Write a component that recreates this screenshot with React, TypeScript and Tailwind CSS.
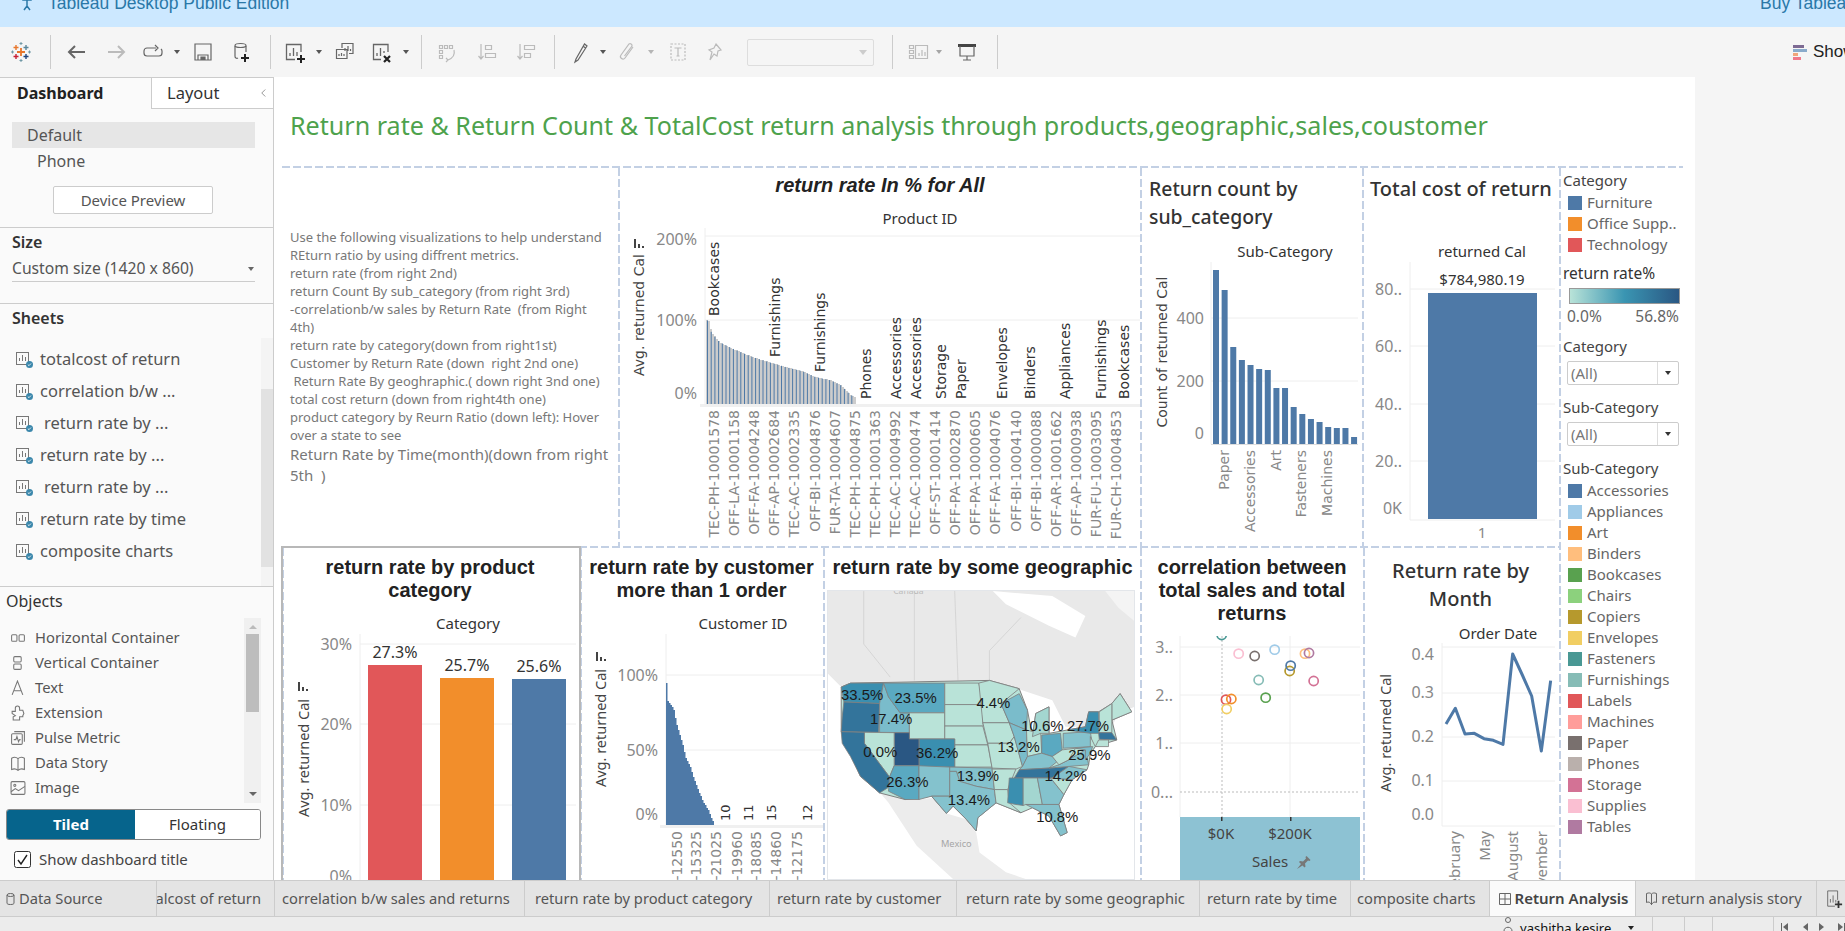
import React from 'react';

const palette: Record<string, string> = {
  l: '#b9e3d8', m: '#a3d6d0', n: '#84c2cd', o: '#7abccb', p: '#5aa9c1', q: '#3a8fb0', r: '#33749b', s: '#2a5783',
};

const usOutline = '90,428 510,420 600,445 625,510 640,590 650,520 690,500 690,580 745,570 800,560 810,515 840,515 880,490 905,460 940,515 880,540 895,600 830,620 815,640 810,675 805,690 760,720 735,765 720,795 745,880 725,890 690,830 640,805 605,820 530,790 475,835 470,875 440,840 400,800 380,822 335,770 255,780 178,760 120,710 62,575 62,440';

const states: [string, string][] = [
  ['q', '90,428 190,428 178,490 70,485 62,440'],
  ['r', '70,485 178,490 175,577 62,575 65,530'],
  ['o', '190,428 205,470 240,518 268,518 268,578 178,577 178,490'],
  ['p', '190,428 375,428 375,518 268,518 240,518 205,470'],
  ['l', '268,518 375,518 375,597 268,597'],
  ['l', '375,428 478,428 490,493 375,493'],
  ['l', '375,493 490,493 490,548 492,558 375,558'],
  ['l', '375,558 490,558 505,615 405,615 405,597 375,597'],
  ['l', '405,615 505,615 518,682 405,682'],
  ['q', '297,597 405,597 405,682 297,682'],
  ['s', '222,578 268,578 268,597 297,597 297,678 222,678'],
  ['l', '132,577 222,578 222,678 208,712 132,610'],
  ['r', '62,575 132,577 132,610 208,712 210,740 178,760 120,710 90,650 65,610'],
  ['p', '222,678 297,678 297,780 255,780 205,755 208,712'],
  ['n', '297,678 390,682 390,770 335,770 297,780'],
  ['n', '390,682 518,685 525,750 470,740 420,725 410,695 390,695'],
  ['n', '390,695 410,695 420,725 470,740 525,750 530,790 475,835 470,875 440,840 400,800 380,822 335,770 390,770'],
  ['l', '478,428 510,420 600,445 545,490 570,548 490,548'],
  ['l', '490,548 570,548 585,590 570,610 505,610'],
  ['l', '505,610 570,610 585,590 610,680 590,688 518,685'],
  ['l', '518,688 590,688 565,750 525,750'],
  ['l', '525,750 565,750 570,790 605,820 530,790'],
  ['o', '545,490 600,460 625,510 622,570 570,548'],
  ['o', '585,590 570,548 622,570 625,650 610,680'],
  ['l', '622,570 665,580 668,640 625,650'],
  ['m', '640,590 650,520 690,500 690,580 665,580'],
  ['p', '668,585 725,580 730,630 700,650 668,640'],
  ['n', '610,680 625,650 668,640 700,650 715,665 690,685 600,690'],
  ['r', '585,715 600,690 690,685 750,680 700,715'],
  ['q', '570,715 612,715 612,798 590,795 565,790'],
  ['m', '612,715 655,715 670,795 620,795 612,798'],
  ['n', '655,715 695,715 735,765 720,795 670,795'],
  ['n', '620,795 720,795 745,880 725,890 690,830 640,805'],
  ['l', '695,715 760,720 735,765'],
  ['n', '700,715 750,680 805,690 760,720'],
  ['n', '690,685 720,675 750,660 800,630 810,675 750,680'],
  ['l', '700,650 730,630 770,625 750,660 720,675'],
  ['n', '733,580 815,575 822,620 733,625'],
  ['q', '745,570 800,560 810,515 840,515 842,580 815,580'],
  ['l', '880,490 905,460 940,515 880,540'],
  ['l', '842,515 880,490 880,578 842,578'],
  ['r', '840,578 880,578 895,600 842,598'],
  ['l', '840,600 870,600 870,620 830,620'],
  ['l', '815,590 830,620 815,640'],
  ['o', '770,625 822,620 815,640 800,660 800,630'],
];

const mapLabels: [string, number, number][] = [
  ['33.5%', 125, 462], ['23.5%', 287, 473], ['17.4%', 213, 537], ['4.4%', 522, 488], ['10.6%', 670, 556],
  ['27.7%', 808, 556], ['13.2%', 598, 621], ['0.0%', 180, 636], ['36.2%', 352, 638], ['25.9%', 812, 645],
  ['26.3%', 262, 725], ['13.9%', 475, 708], ['14.2%', 740, 708], ['13.4%', 448, 781], ['10.8%', 715, 833],
];

const productIds = [
  'TEC-PH-10001578', 'OFF-LA-10001158', 'OFF-FA-10004248', 'OFF-AP-10002684', 'TEC-AC-10002335', 'OFF-BI-10004876',
  'FUR-TA-10004607', 'TEC-PH-10004875', 'TEC-PH-10001363', 'TEC-AC-10004992', 'TEC-AC-10000474', 'OFF-ST-10001414',
  'OFF-PA-10002870', 'OFF-PA-10000605', 'OFF-FA-10004076', 'OFF-BI-10004140', 'OFF-BI-10000088', 'OFF-AR-10001662',
  'OFF-AP-10000938', 'FUR-FU-10003095', 'FUR-CH-10004853',
];

const topLabels: [string, number, number][] = [
  ['Bookcases', 714, 316], ['Furnishings', 775, 357], ['Furnishings', 820, 372], ['Phones', 866, 399],
  ['Accessories', 896, 399], ['Accessories', 916, 399], ['Storage', 941, 399], ['Paper', 961, 399],
  ['Envelopes', 1002, 399], ['Binders', 1030, 399], ['Appliances', 1065, 399], ['Furnishings', 1101, 399], ['Bookcases', 1124, 399],
];

const subCats: [string, string][] = [
  ['Accessories', '#4e79a7'], ['Appliances', '#a0cbe8'], ['Art', '#f28e2b'], ['Binders', '#ffbe7d'], ['Bookcases', '#59a14f'],
  ['Chairs', '#8cd17d'], ['Copiers', '#b6992d'], ['Envelopes', '#f1ce63'], ['Fasteners', '#499894'], ['Furnishings', '#86bcb6'],
  ['Labels', '#e15759'], ['Machines', '#ff9d9a'], ['Paper', '#79706e'], ['Phones', '#bab0ac'], ['Storage', '#d37295'],
  ['Supplies', '#fabfd2'], ['Tables', '#b07aa1'],
];

const note = [
  'Use the following visualizations to help understand',
  'REturn ratio by using diffrent metrics.',
  'return rate (from right 2nd)',
  'return Count By sub_category (from right 3rd)',
  '-correlationb/w sales by Return Rate  (from Right',
  '4th)',
  'return rate by category(down from right1st)',
  'Customer by Return Rate (down  right 2nd one)',
  ' Return Rate By geoghraphic.( down right 3nd one)',
  'total cost return (down from right4th one)',
  'product category by Reurn Ratio (down left): Hover',
  'over a state to see',
];

function lerp(pts: number[][], x: number) {
  for (let i = 1; i < pts.length; i++) {
    if (x <= pts[i][0]) {
      const [x0, y0] = pts[i - 1];
      const [x1, y1] = pts[i];
      return y0 + ((y1 - y0) * (x - x0)) / (x1 - x0);
    }
  }
  return pts[pts.length - 1][1];
}

const productCurve = [[706, 320], [708, 321], [711, 333], [719, 342], [735, 350], [752, 357], [768, 362], [785, 367], [801, 371], [815, 377], [829, 380], [840, 385], [850, 395], [855, 397]];
const customerCurve = [[666, 683], [667, 700], [673, 708], [677, 727], [682, 743], [685, 757], [690, 767], [695, 783], [702, 800], [708, 810], [714, 825]];

// stepped outline for the two long bar charts
function stepped(curve: number[][], from: number, to: number, step: number, base: number) {
  let d = `M${from} ${base}`;
  for (let x = from; x < to; x += step) {
    const y = Math.round(lerp(curve, x));
    d += ` L${x} ${y} L${x + step} ${y}`;
  }
  return d + ` L${to} ${base} Z`;
}

const Rot = ({ x, y, children, anchor = 'end', className = '' }: { x: number; y: number; children: React.ReactNode; anchor?: 'start' | 'middle' | 'end'; className?: string }) => (
  <text x={x} y={y} textAnchor={anchor} transform={`rotate(-90 ${x} ${y})`} className={className}>{children}</text>
);

const SortIcon = ({ x, y }: { x: number; y: number }) => (
  <g fill="#444">
    <rect x={x} y={y} width="2" height="9" />
    <rect x={x + 4} y={y + 5} width="2" height="4" />
    <rect x={x + 8} y={y + 7} width="2" height="2" />
  </g>
);

const VDash = () => (
  <div className="w-[2px] shrink-0 self-stretch bg-[repeating-linear-gradient(180deg,#c3d0e4_0,#c3d0e4_8px,transparent_8px,transparent_11px)]" />
);
const HDash = () => (
  <div className="h-[2px] shrink-0 bg-[repeating-linear-gradient(90deg,#c3d0e4_0,#c3d0e4_8px,transparent_8px,transparent_11px)]" />
);

const ProductChart = () => {
  const bars = [];
  for (let x = 707; x < 855; x += 3.7) {
    bars.push(<rect key={x} x={x} y={lerp(productCurve, x)} width="1" height={404 - lerp(productCurve, x)} fill="#4e79a7" />);
  }
  return (
    <svg viewBox="620 203 520 343" className="block w-[520px] h-[343px]">
      <text x="920" y="224" textAnchor="middle" className="text-[15px] fill-[#333]">Product ID</text>
      <g stroke="#eeeeee">
        <line x1="705" y1="236" x2="1140" y2="236" />
        <line x1="705" y1="320" x2="1140" y2="320" />
        <line x1="705" y1="228" x2="705" y2="405" />
      </g>
      <rect x="700" y="404" width="440" height="3" fill="#f0f0f0" />
      <path d={stepped(productCurve, 706, 856, 2, 404)} fill="#cccccc" />
      {bars}
      <Rot x={644} y={315} anchor="middle" className="font-['DejaVu_Sans',sans-serif] text-[14px] font-medium fill-[#444]">Avg. returned Cal</Rot>
      <SortIcon x={634} y={239} />
      <g className="text-[16px] fill-[#888]" textAnchor="end">
        <text x="697" y="245">200%</text>
        <text x="697" y="326">100%</text>
        <text x="697" y="399">0%</text>
      </g>
      <g className="font-['DejaVu_Sans',sans-serif] text-[14px] fill-[#333]">
        {topLabels.map(([t, x, y], i) => <Rot key={i} x={x + 5} y={y} anchor="start">{t}</Rot>)}
      </g>
      <g className="font-['DejaVu_Sans',sans-serif] text-[14px] fill-[#888]">
        {productIds.map((t, i) => <Rot key={t} x={719 + i * 20.1} y={410}>{t}</Rot>)}
      </g>
    </svg>
  );
};

const CountChart = () => {
  const tops = [270, 290, 347, 360, 365, 369, 370, 388, 388, 407, 414, 419, 422, 427, 428, 428, 437];
  return (
    <svg viewBox="1142 236 220 310" className="block w-[220px] h-[310px]">
      <text x="1285" y="257" textAnchor="middle" className="text-[15px] fill-[#333]">Sub-Category</text>
      <g stroke="#eeeeee">
        <line x1="1211" y1="318" x2="1358" y2="318" />
        <line x1="1211" y1="381" x2="1358" y2="381" />
        <line x1="1211" y1="262" x2="1211" y2="444" />
      </g>
      <rect x="1211" y="444" width="147" height="1" fill="#dddddd" />
      {tops.map((y, i) => <rect key={i} x={1213 + i * 8.63} y={y} width="6" height={444 - y} fill="#4e79a7" />)}
      <Rot x={1167} y={352} anchor="middle" className="font-['DejaVu_Sans',sans-serif] text-[14px] font-medium fill-[#444]">Count of returned Cal</Rot>
      <g className="text-[16px] fill-[#888]" textAnchor="end">
        <text x="1204" y="324">400</text>
        <text x="1204" y="387">200</text>
        <text x="1204" y="439">0</text>
      </g>
      <g className="font-['DejaVu_Sans',sans-serif] text-[14px] fill-[#888]">
        <Rot x={1229} y={450}>Paper</Rot>
        <Rot x={1255} y={450}>Accessories</Rot>
        <Rot x={1281} y={450}>Art</Rot>
        <Rot x={1306} y={450}>Fasteners</Rot>
        <Rot x={1332} y={450}>Machines</Rot>
      </g>
    </svg>
  );
};

const CostChart = () => (
  <svg viewBox="1364 236 195 310" className="block w-[195px] h-[310px]">
    <text x="1482" y="257" textAnchor="middle" className="text-[15px] fill-[#333]">returned Cal</text>
    <g stroke="#eeeeee">
      {[289, 346, 404, 461, 520].map((y) => <line key={y} x1="1410" y1={y} x2="1555" y2={y} />)}
      <line x1="1410" y1="262" x2="1410" y2="520" />
    </g>
    <rect x="1428" y="293" width="109" height="226" fill="#4e79a7" />
    <text x="1482" y="285" textAnchor="middle" className="text-[15px] fill-[#333]">$784,980.19</text>
    <g className="text-[16px] fill-[#888]" textAnchor="end">
      <text x="1402" y="295">80..</text>
      <text x="1402" y="352">60..</text>
      <text x="1402" y="410">40..</text>
      <text x="1402" y="467">20..</text>
      <text x="1402" y="514">0K</text>
    </g>
    <text x="1482" y="538" textAnchor="middle" className="text-[15px] fill-[#888]">1</text>
  </svg>
);

const CategoryChart = () => (
  <svg viewBox="284 612 296 268" className="block w-[296px] h-[268px]">
    <text x="468" y="629" textAnchor="middle" className="text-[15px] fill-[#333]">Category</text>
    <g stroke="#eeeeee">
      {[644, 724, 805].map((y) => <line key={y} x1="360" y1={y} x2="576" y2={y} />)}
      <line x1="360" y1="634" x2="360" y2="880" />
    </g>
    <rect x="368" y="665" width="54" height="215" fill="#e15759" />
    <rect x="440" y="678" width="54" height="202" fill="#f28e2b" />
    <rect x="512" y="679" width="54" height="201" fill="#4e79a7" />
    <g className="text-[16px] fill-[#333]" textAnchor="middle">
      <text x="395" y="658">27.3%</text>
      <text x="467" y="671">25.7%</text>
      <text x="539" y="672">25.6%</text>
    </g>
    <g className="text-[16px] fill-[#888]" textAnchor="end">
      <text x="352" y="650">30%</text>
      <text x="352" y="730">20%</text>
      <text x="352" y="811">10%</text>
      <text x="352" y="882">0%</text>
    </g>
    <Rot x={309} y={758} anchor="middle" className="text-[14.5px] fill-[#444]">Avg. returned Cal</Rot>
    <SortIcon x={298} y={682} />
  </svg>
);

const CustomerChart = () => (
  <svg viewBox="582 612 241 268" className="block w-[241px] h-[268px]">
    <text x="743" y="629" textAnchor="middle" className="text-[15px] fill-[#333]">Customer ID</text>
    <g stroke="#eeeeee">
      <line x1="666" y1="675" x2="823" y2="675" />
      <line x1="666" y1="750" x2="823" y2="750" />
      <line x1="666" y1="634" x2="666" y2="825" />
    </g>
    <rect x="660" y="825" width="163" height="3" fill="#f0f0f0" />
    <path d={stepped(customerCurve, 666, 714, 1.5, 825)} fill="#4e79a7" />
    <g className="text-[16px] fill-[#888]" textAnchor="end">
      <text x="658" y="681">100%</text>
      <text x="658" y="756">50%</text>
      <text x="658" y="820">0%</text>
    </g>
    <Rot x={606} y={728} anchor="middle" className="text-[14.5px] fill-[#444]">Avg. returned Cal</Rot>
    <SortIcon x={596} y={652} />
    <g className="font-['DejaVu_Sans',sans-serif] text-[13px] fill-[#333]">
      <Rot x={730} y={821} anchor="start">10</Rot>
      <Rot x={753} y={821} anchor="start">11</Rot>
      <Rot x={776} y={821} anchor="start">15</Rot>
      <Rot x={812} y={821} anchor="start">12</Rot>
    </g>
    <g className="font-['DejaVu_Sans',sans-serif] text-[14px] fill-[#888]">
      {[['-12550', 682], ['-15325', 701], ['-21025', 721], ['-19960', 742], ['-18085', 761], ['-14860', 781], ['-12175', 802]].map(([t, x]) => (
        <Rot key={t} x={x as number} y={831}>{t}</Rot>
      ))}
    </g>
  </svg>
);

const MapChart = () => (
  <svg viewBox="22 150 925 870" className="block w-[308px] h-[290px] border border-[#e3e6ea]">
    <rect x="22" y="150" width="925" height="870" fill="#ffffff" />
    <polygon points="22,150 947,150 947,500 900,520 880,560 800,560 740,560 700,480 520,420 90,425 62,440 22,400" fill="#e9e9e9" />
    <polygon points="520,150 700,165 800,225 770,290 690,255 560,190" fill="#ffffff" />
    <polygon points="860,150 947,150 947,240 900,200" fill="#f4f4f4" />
    <polygon points="180,760 300,780 340,775 380,822 440,840 470,880 480,940 560,1000 620,1020 400,1020 290,920 205,790" fill="#ececec" />
    <g fill="none" stroke="#cccccc" strokeWidth="2">
      <polyline points="130,150 130,310 210,410" />
      <polyline points="283,150 283,420" />
      <polyline points="405,150 415,420" />
      <polyline points="605,230 510,330 510,420" />
    </g>
    <text x="265" y="160" textAnchor="middle" fontSize="26" fill="#bbbbbb">Canada</text>
    <polygon points={usOutline} fill="#b9e3d8" stroke="#808080" strokeWidth="3" strokeLinejoin="round" />
    <g stroke="#808080" strokeWidth="2.5" strokeLinejoin="round">
      {states.map(([c, p], i) => <polygon key={i} points={p} fill={palette[c]} />)}
    </g>
    <text x="410" y="925" textAnchor="middle" fontSize="28" fill="#a6a6a6">Mexico</text>
    <g fontSize="45" fill="#1a1a1a" textAnchor="middle" className="font-['Liberation_Sans',sans-serif]">
      {mapLabels.map(([t, x, y]) => <text key={t} x={x} y={y + 16}>{t}</text>)}
    </g>
  </svg>
);

const ScatterChart = () => {
  const dots: [number, number, string][] = [
    [275, 285, '#499894'], [326, 341, '#fabfd2'], [374, 348, '#79706e'], [434, 329, '#a0cbe8'], [525, 341, '#ffbe7d'],
    [537, 339, '#b07aa1'], [479, 393, '#b6992d'], [482, 377, '#4e79a7'], [551, 423, '#d37295'], [386, 420, '#86bcb6'],
    [407, 473, '#59a14f'], [288, 479, '#e15759'], [304, 477, '#f28e2b'], [290, 507, '#f1ce63'],
  ];
  return (
    <svg viewBox="1142 636 221 244" className="block w-[221px] h-[244px]">
      <g stroke="#eeeeee">
        <line x1="1180" y1="647" x2="1360" y2="647" />
        <line x1="1180" y1="695" x2="1360" y2="695" />
        <line x1="1180" y1="743" x2="1360" y2="743" />
        <line x1="1180" y1="636" x2="1180" y2="817" />
        <line x1="1290" y1="636" x2="1290" y2="817" />
      </g>
      <line x1="1180" y1="792" x2="1360" y2="792" stroke="#bbbbbb" strokeDasharray="2 2" />
      <line x1="1222" y1="636" x2="1222" y2="817" stroke="#bbbbbb" strokeDasharray="2 2" />
      {dots.map(([x, y, c], i) => (
        <circle key={i} cx={1130 + x / 3} cy={540 + y / 3} r="4.6" fill="none" stroke={c} strokeWidth="1.7" />
      ))}
      <g className="text-[16px] fill-[#888]" textAnchor="end">
        <text x="1173" y="653">3..</text>
        <text x="1173" y="701">2..</text>
        <text x="1173" y="749">1..</text>
        <text x="1173" y="798">0...</text>
      </g>
      <rect x="1180" y="817" width="180" height="63" fill="#8dc2d3" />
      <rect x="1221" y="817" width="1.5" height="4" fill="#333" />
      <rect x="1290" y="817" width="1.5" height="4" fill="#333" />
      <g className="text-[15px] fill-[#444]" textAnchor="middle">
        <text x="1221" y="839">$0K</text>
        <text x="1290" y="839">$200K</text>
        <text x="1270" y="867">Sales</text>
      </g>
      <path d="M1297 869l4-5-2-2 1-1 3 .5 3-3 -.5-1.500 1-1 4 4-1 1-1.500-.5-3 3 .5 3-1 1-2-2z" fill="#777" />
    </svg>
  );
};

const MonthChart = () => {
  const pts = [[948, 552], [976, 505], [1005, 582], [1033, 580], [1062, 596], [1090, 601], [1119, 613], [1148, 342], [1177, 405], [1205, 468], [1234, 633], [1262, 422]];
  return (
    <svg viewBox="1365 620 194 260" className="block w-[194px] h-[260px]">
      <text x="1498" y="639" textAnchor="middle" className="text-[15px] fill-[#333]">Order Date</text>
      <g stroke="#eeeeee">
        {[647, 693, 737, 781, 826].map((y) => <line key={y} x1="1442" y1={y} x2="1555" y2={y} />)}
        <line x1="1442" y1="643" x2="1442" y2="826" />
      </g>
      <polyline points={pts.map(([x, y]) => `${1130 + x / 3},${540 + y / 3}`).join(' ')} fill="none" stroke="#4e79a7" strokeWidth="3" strokeLinejoin="round" />
      <g className="text-[16px] fill-[#888]" textAnchor="end">
        <text x="1434" y="660">0.4</text>
        <text x="1434" y="698">0.3</text>
        <text x="1434" y="742">0.2</text>
        <text x="1434" y="786">0.1</text>
        <text x="1434" y="820">0.0</text>
      </g>
      <Rot x={1391} y={733} anchor="middle" className="text-[14.5px] fill-[#444]">Avg. returned Cal</Rot>
      <g className="text-[15px] fill-[#888]">
        <Rot x={1460} y={831}>February</Rot>
        <Rot x={1490} y={831}>May</Rot>
        <Rot x={1518} y={831}>August</Rot>
        <Rot x={1547} y={831}>November</Rot>
      </g>
    </svg>
  );
};

const Swatch = ({ label, color }: { label: string; color: string }) => (
  <div className="flex h-[21px] items-center gap-[5px]">
    <span className="w-[14px] h-[14px] shrink-0" style={{ backgroundColor: color }} />
    <span className="text-[15px] text-[#666] whitespace-nowrap">{label}</span>
  </div>
);

const Picker = () => (
  <div className="ml-[4px] flex h-[24px] w-[112px] items-center border border-[#ccc] rounded-[2px] bg-white">
    <span className="flex-1 pl-[3px] text-[15px] text-[#777]">(All)</span>
    <span className="flex h-full w-[21px] items-center justify-center border-l border-[#ddd]">
      <span className="border-x-[3px] border-t-[4px] border-x-transparent border-t-[#333]" />
    </span>
  </div>
);

const Legend = () => (
  <div className="w-[122px] pt-[2px] pl-[2px]">
    <div className="h-[20px] text-[15px] leading-[20px] text-[#444]">Category</div>
    <div className="ml-[5px] mt-[2px]">
      <Swatch label="Furniture" color="#4e79a7" />
      <Swatch label="Office Supp.." color="#f28e2b" />
      <Swatch label="Technology" color="#e15759" />
    </div>
    <div className="mt-[8px] h-[20px] text-[15.5px] leading-[20px] text-[#333]">return rate%</div>
    <div className="ml-[6px] mt-[5px] h-[16px] w-[111px] border border-[#999] bg-[linear-gradient(90deg,#b9e3d8,#3a95b2_50%,#2a5783)]" />
    <div className="ml-[4px] mt-[2px] flex w-[112px] justify-between text-[15.5px] leading-[20px] text-[#666]">
      <span>0.0%</span>
      <span>56.8%</span>
    </div>
    <div className="mt-[10px] h-[20px] text-[15px] leading-[20px] text-[#444]">Category</div>
    <div className="mt-[5px]"><Picker /></div>
    <div className="mt-[12px] h-[20px] text-[15px] leading-[20px] text-[#444]">Sub-Category</div>
    <div className="mt-[5px]"><Picker /></div>
    <div className="mt-[12px] h-[20px] text-[15px] leading-[20px] text-[#444]">Sub-Category</div>
    <div className="ml-[5px] mt-[2px]">
      {subCats.map(([t, c]) => <Swatch key={t} label={t} color={c} />)}
    </div>
  </div>
);

const Dashboard = () => (
  <div className="w-[1421px] shrink-0 bg-white overflow-hidden font-['Noto_Sans',sans-serif]">
    <div className="flex h-[89px] items-end pb-[23px] pl-[16px] text-[25.1px] leading-[36px] text-[#4ea24c] whitespace-nowrap">
      Return rate &amp; Return Count &amp; TotalCost return analysis through products,geographic,sales,coustomer
    </div>
    <div className="ml-[8px] w-[1401px]"><HDash /></div>
    <div className="ml-[8px] flex w-[1401px] h-[714px]">
      <div className="w-[1277px] shrink-0 flex flex-col">
        <div className="flex h-[378px]">
          <div className="w-[2px] shrink-0" />
          <div className="w-[334px] shrink-0 pl-[6px] pt-[60px] text-[13px] leading-[18px] text-[#787878] whitespace-pre">
            {note.map((l, i) => <p key={i}>{l}</p>)}
            <p className="text-[15px] leading-[21px]">Return Rate by Time(month)(down from right</p>
            <p className="text-[15px] leading-[21px]">5th  )</p>
          </div>
          <VDash />
          <div className="w-[520px] shrink-0">
            <div className="h-[35px] pt-[5px] text-center font-['Liberation_Sans',sans-serif] text-[20px] leading-[24px] font-bold italic text-[#222]">return rate In % for All</div>
            <ProductChart />
          </div>
          <VDash />
          <div className="w-[220px] shrink-0">
            <div className="h-[68px] pl-[7px] pt-[7px] text-[19.4px] leading-[28px] font-medium text-[#333] whitespace-nowrap">Return count by<br />sub_category</div>
            <CountChart />
          </div>
          <VDash />
          <div className="w-[195px] shrink-0">
            <div className="h-[68px] pl-[6px] pt-[7px] text-[20px] leading-[28px] font-medium text-[#333] whitespace-nowrap">Total cost of return</div>
            <CostChart />
          </div>
        </div>
        <HDash />
        <div className="flex h-[332px]">
          <div className="relative flex">
            <VDash />
            <div className="w-[296px] shrink-0">
              <div className="h-[64px] pt-[8px] text-center font-['Liberation_Sans',sans-serif] text-[20px] leading-[23px] font-bold text-[#222] pr-[4px]">return rate by product<br />category</div>
              <CategoryChart />
            </div>
            <div className="absolute -left-[1px] -top-[2px] -right-[1px] bottom-0 border-x-[2px] border-t-[2px] border-[#b8b8b8]" />
          </div>
          <VDash />
          <div className="w-[241px] shrink-0">
            <div className="h-[64px] pt-[8px] pr-[2px] text-center font-['Liberation_Sans',sans-serif] text-[20px] leading-[23px] font-bold text-[#222] whitespace-nowrap">return rate by customer<br />more than 1 order</div>
            <CustomerChart />
          </div>
          <VDash />
          <div className="w-[315px] shrink-0">
            <div className="h-[42px] pt-[8px] text-center font-['Liberation_Sans',sans-serif] text-[20px] leading-[23px] font-bold text-[#222] whitespace-nowrap">return rate by some geographic</div>
            <div className="pl-[2px]"><MapChart /></div>
          </div>
          <VDash />
          <div className="w-[221px] shrink-0">
            <div className="h-[88px] pt-[8px] pr-[1px] text-center font-['Liberation_Sans',sans-serif] text-[20px] leading-[23px] font-bold text-[#222]">correlation between<br />total sales and total<br />returns</div>
            <ScatterChart />
          </div>
          <VDash />
          <div className="w-[194px] shrink-0">
            <div className="h-[72px] pt-[9px] text-center text-[20px] leading-[28px] font-medium text-[#333] pr-[3px]">Return rate by<br />Month</div>
            <MonthChart />
          </div>
        </div>
      </div>
      <VDash />
      <Legend />
    </div>
  </div>
);

const SheetIcon = ({ dot = true }: { dot?: boolean }) => (
  <svg viewBox="0 0 17 17" className="w-[17px] h-[17px] shrink-0">
    <rect x="0.5" y="1.5" width="12" height="12" fill="none" stroke="#777" />
    <path d="M3.5 10V7M6.500 10V4M9.500 10V6" stroke="#777" />
    {dot && <circle cx="13.5" cy="13.5" r="3.5" fill="#3b87ab" />}
    {dot && <path d="M11.8 13.5l1.2 1.2 2-2.2" stroke="#fff" fill="none" strokeWidth="0.8" />}
  </svg>
);

const Sheet = ({ label, indent, dot }: { label: string; indent?: boolean; dot?: boolean }) => (
  <div className={`flex h-[32px] items-center pl-[16px] ${indent ? 'gap-[11px]' : 'gap-[7px]'}`}>
    <SheetIcon dot={dot} />
    <span className="text-[16.5px] text-[#555] whitespace-nowrap">{label}</span>
  </div>
);

const objectIcons: Record<string, React.ReactNode> = {
  h: <><rect x="1.5" y="4.5" width="5" height="6" rx="1" /><rect x="8.5" y="4.5" width="5" height="6" rx="1" /></>,
  v: <><rect x="3.5" y="1.5" width="7" height="5" rx="1" /><rect x="3.5" y="8.5" width="7" height="5" rx="1" /></>,
  t: <path d="M2 14L7 1l5 13M4 10h6" />,
  e: <path d="M2 6h3V3a2 2 0 0 1 4 0v2h3l1 3-1 2v1H9v3H3v-3l2-1-3-2z" />,
  p: <><rect x="1.5" y="3.5" width="10" height="10" rx="1" /><path d="M4 1.500h9.500V11M3.500 9h2l1-3 1.500 5 1-2h1" /></>,
  d: <path d="M1.500 3C4 1.500 6 2 7.500 3.500 9 2 11 1.500 13.500 3v10.500C11 12.500 9 13 7.500 14.500 6 13 4 12.500 1.500 13.500zM7.500 3.500v11" />,
  i: <><rect x="1" y="1.5" width="13" height="12" rx="1" /><circle cx="4.5" cy="5" r="1" /><path d="M1 11l4-3 3 2 6-4" /></>,
};

const ObjectRow = ({ icon, label }: { icon: string; label: string }) => (
  <div className="flex h-[25px] items-center gap-[9px] pl-[10px]">
    <svg viewBox="0 0 15 15" className="w-[16px] h-[16px] shrink-0" fill="none" stroke="#777">{objectIcons[icon]}</svg>
    <span className="text-[14.8px] text-[#555] whitespace-nowrap">{label}</span>
  </div>
);

const Sidebar = () => (
  <div className="w-[274px] shrink-0 border-r border-[#ccc] bg-[#fafafa] font-['Noto_Sans',sans-serif]">
    <div className="flex h-[32px] border-t border-[#ccc]">
      <div className="w-[151px] pl-[17px] text-[16px] leading-[30px] font-bold text-[#222]">Dashboard</div>
      <div className="flex-1 flex items-center justify-between border-l border-b border-[#ccc] bg-white pl-[15px] pr-[6px]">
        <span className="text-[16.5px] text-[#333]">Layout</span>
        <svg viewBox="0 0 8 10" className="w-[7px] h-[10px]"><path d="M6 1L2 5l4 4" fill="none" stroke="#888" /></svg>
      </div>
    </div>
    <div className="ml-[12px] mt-[13px] h-[26px] w-[243px] bg-[#e6e6e6] pl-[15px] text-[16px] leading-[26px] text-[#555]">Default</div>
    <div className="h-[26px] pl-[37px] text-[16px] leading-[26px] text-[#555]">Phone</div>
    <div className="ml-[53px] mt-[12px] flex h-[28px] w-[160px] items-center justify-center rounded-[2px] border border-[#ccc] bg-white text-[15px] text-[#555]">Device Preview</div>
    <div className="mt-[13px] h-[76px] border-t border-[#ccc]">
      <div className="pl-[12px] pt-[1px] text-[16px] leading-[26px] font-semibold text-[#333]">Size</div>
      <div className="ml-[12px] flex h-[27px] w-[243px] items-center justify-between border-b border-[#ccc] pt-[2px]">
        <span className="text-[15.7px] text-[#555]">Custom size (1420 x 860)</span>
        <span className="mr-[1px] border-x-[3px] border-t-[4px] border-x-transparent border-t-[#666]" />
      </div>
    </div>
    <div className="h-[283px] border-t border-[#ccc]">
      <div className="h-[34px] pl-[12px] pt-[1px] text-[16px] leading-[26px] font-semibold text-[#333]">Sheets</div>
      <div className="flex h-[248px]">
        <div className="flex-1 pt-[5px]">
          <Sheet label="totalcost of return" dot />
          <Sheet label="correlation b/w ..." dot />
          <Sheet label="return rate by ..." dot indent />
          <Sheet label="return rate by ..." dot />
          <Sheet label="return rate by ..." dot indent />
          <Sheet label="return rate by time" dot />
          <Sheet label="composite charts" />
        </div>
        <div className="w-[12px] bg-[#f4f4f4] pt-[51px]"><div className="h-[178px] bg-[#e2e2e2]" /></div>
      </div>
    </div>
    <div className="border-t border-[#ccc]">
      <div className="h-[31px] pl-[6px] pt-[1px] text-[16px] leading-[26px] text-[#333]">Objects</div>
      <div className="flex h-[185px] w-[261px]">
        <div className="flex-1 pt-[7px]">
          <ObjectRow icon="h" label="Horizontal Container" />
          <ObjectRow icon="v" label="Vertical Container" />
          <ObjectRow icon="t" label="Text" />
          <ObjectRow icon="e" label="Extension" />
          <ObjectRow icon="p" label="Pulse Metric" />
          <ObjectRow icon="d" label="Data Story" />
          <ObjectRow icon="i" label="Image" />
        </div>
        <div className="flex w-[17px] flex-col items-center bg-[#f0f0f0] py-[7px]">
          <span className="border-x-[4px] border-b-[4px] border-x-transparent border-b-[#bbb]" />
          <div className="mt-[5px] h-[78px] w-[13px] bg-[#bdbdbd]" />
          <span className="mt-auto border-x-[4px] border-t-[4px] border-x-transparent border-t-[#666]" />
        </div>
      </div>
    </div>
    <div className="ml-[6px] mt-[6px] flex h-[31px] w-[255px] overflow-hidden rounded-[3px] border border-[#888]">
      <div className="flex w-[128px] items-center justify-center bg-[#06648c] text-[15px] font-bold text-white">Tiled</div>
      <div className="flex flex-1 items-center justify-center bg-white text-[15px] text-[#333]">Floating</div>
    </div>
    <div className="mt-[8px] flex items-center gap-[8px] pl-[14px]">
      <svg viewBox="0 0 17 17" className="w-[17px] h-[17px]">
        <rect x="0.5" y="0.5" width="16" height="16" rx="2" fill="#fff" stroke="#333" />
        <path d="M4 9l3 4 6-9" fill="none" stroke="#222" strokeWidth="1.4" />
      </svg>
      <span className="text-[15px] text-[#444]">Show dashboard title</span>
    </div>
  </div>
);

const Caret = ({ cls }: { cls: string }) => (
  <span className={`w-[10px] flex justify-center ${cls}`}>
    <span className="border-x-[3px] border-t-[4px] border-x-transparent border-t-[#555]" />
  </span>
);
const Sep = ({ cls }: { cls: string }) => <span className={`h-[34px] w-px bg-[#ccc] ${cls}`} />;

const Ic = ({ cls, children, stroke = '#666' }: { cls: string; children: React.ReactNode; stroke?: string }) => (
  <svg viewBox="0 0 26 26" className={`w-[26px] h-[26px] shrink-0 ${cls}`} fill="none" stroke={stroke} strokeWidth="1.2">{children}</svg>
);

const Toolbar = () => (
  <div className="flex h-[50px] items-center bg-[#f5f5f5] font-['Noto_Sans',sans-serif]">
    <svg viewBox="0 0 20 20" className="ml-[11px] w-[20px] h-[20px] shrink-0" strokeWidth="1.4">
      <path d="M10 6v8M6 10h8" stroke="#e8762b" strokeWidth="1.8" />
      <path d="M5 3v5M2.500 5.500h5" stroke="#e8762b" />
      <path d="M15 3v5M12.500 5.500h5" stroke="#5b879b" />
      <path d="M5 12v5M2.500 14.500h5" stroke="#c72035" />
      <path d="M15 12v5M12.500 14.500h5" stroke="#1f447e" />
      <path d="M10 0v3M8.500 1.500h3M10 17v3M8.500 18.500h3M1.500 8.500v3M0 10h3M18.500 8.500v3M17 10h3" stroke="#7099a6" strokeWidth="1" />
    </svg>
    <Sep cls="ml-[19px]" />
    <Ic cls="ml-[13px]" stroke="#666"><path d="M21 13H5M11 7l-6 6 6 6" strokeWidth="2" /></Ic>
    <Ic cls="ml-[13px]" stroke="#bbb"><path d="M5 13h16M15 7l6 6-6 6" strokeWidth="2" /></Ic>
    <Ic cls="ml-[11px]"><path d="M16 9H7a3 3 0 0 0-3 3v2a3 3 0 0 0 3 3h12a3 3 0 0 0 3-3v-2a3 3 0 0 0-1-2M15 6l3 3-3 3" /></Ic>
    <Caret cls="ml-[6px]" />
    <Ic cls="ml-[8px]"><path d="M5 5h16v16H5zM8 21v-5h10v5" /><path d="M11 21v-3h4v3" fill="#666" /></Ic>
    <Ic cls="ml-[11px]"><ellipse cx="13.500" cy="6.500" rx="5.500" ry="2" /><path d="M8 7v10a2 2 0 0 0 3 2M19 7v6" /><path d="M14 19h8M18 15v8" stroke="#222" strokeWidth="2" /></Ic>
    <Sep cls="ml-[17px]" />
    <Ic cls="ml-[11px]"><path d="M19 13V5.500H4.500v15H13M8 17v-3M11.500 17V9M15 17v-4" strokeWidth="1.300" /><path d="M15 20h8M19 16v8" stroke="#222" strokeWidth="2" /></Ic>
    <Caret cls="ml-[6px]" />
    <Ic cls="ml-[8px]"><path d="M10 9V4.500h11v10h-4M13 12V9M16 12V7M18.500 12v-2M4.500 10.500H15v9H4.500zM7 17v-2M9.500 17v-3M12 17v-2" /></Ic>
    <Ic cls="ml-[10px]"><path d="M20 13V5.500H5.500v15H13M9 17v-3M12.500 17V9M16 14v-2" strokeWidth="1.300" /><path d="M16 17l6 6M22 17l-6 6" stroke="#222" strokeWidth="2.200" /></Ic>
    <Caret cls="ml-[7px]" />
    <Sep cls="ml-[10px]" />
    <Ic cls="ml-[11px]" stroke="#bbb"><path d="M6.500 6.500h3v3h-3zM11.500 6.500h3v3h-3zM16.500 6.500h3v3h-3zM6.500 11.500h3v3h-3zM6.500 16.500h3v3h-3zM21 11c1 4-1 8-6 10M13 19l2 2-2 2" /></Ic>
    <Ic cls="ml-[15px]" stroke="#bbb"><path d="M7 5v14M4.500 17l2.500 3 2.500-3M11.500 6.500h6v4h-6zM11.500 14.500h10v4h-10z" /></Ic>
    <Ic cls="ml-[13px]" stroke="#bbb"><path d="M7 5v14M4.500 17l2.500 3 2.500-3M11.500 6.500h10v4h-10zM11.500 14.500h6v4h-6z" /></Ic>
    <Sep cls="ml-[15px]" />
    <Ic cls="ml-[12px]"><path d="M9 20l-1 3 3-2L20 7l-2.500-2zM16 7l2.500 2" /></Ic>
    <Caret cls="ml-[5px]" />
    <Ic cls="ml-[7px]" stroke="#bbb"><path d="M18 8L10 19a2.500 2.500 0 0 1-4-3L14 5a2 2 0 0 1 3 2L9.500 17" /></Ic>
    <Caret cls="ml-[5px] opacity-40" />
    <Ic cls="ml-[9px]" stroke="#bbb"><path d="M6 5h14v16H6z" strokeDasharray="2 1.500" /><path d="M9.500 9h7M13 9v8M11.500 17h3" /></Ic>
    <Ic cls="ml-[10px]" stroke="#bbb"><path d="M15 5l5 6-3 1-1 5-3-2-4 6 2-8-3-2 5-2z" /></Ic>
    <div className="ml-[20px] flex h-[27px] w-[127px] items-center justify-end rounded-[2px] border border-[#ddd] pr-[6px]">
      <span className="border-x-[4px] border-t-[5px] border-x-transparent border-t-[#ccc]" />
    </div>
    <Sep cls="ml-[18px]" />
    <Ic cls="ml-[12px]" stroke="#bbb"><path d="M4.500 6.500h4v3h-4zM4.500 11.500h4v3h-4zM4.500 16.500h4v3h-4zM10.500 6.500h12v13h-12zM14 17v-3M17 17v-6M20 17v-4" /></Ic>
    <Caret cls="ml-[3px] opacity-50" />
    <Ic cls="ml-[9px]"><path d="M5 6.500h18" stroke="#444" strokeWidth="3" /><path d="M7 7v10h14V7M14 17v4M10 21h8" /></Ic>
    <Sep cls="ml-[18px]" />
    <div className="ml-auto flex w-[52px] items-center gap-[6px] overflow-hidden">
      <svg viewBox="0 0 14 15" className="w-[14px] h-[15px] shrink-0">
        <rect width="11" height="3" fill="#7d6a93" />
        <rect y="4" width="14" height="3" fill="#8aabcb" />
        <rect y="8" width="5" height="3" fill="#f0a57a" />
        <rect y="12" width="8" height="3" fill="#f0788a" />
      </svg>
      <span className="font-['Liberation_Sans',sans-serif] text-[17px] text-[#222] whitespace-nowrap">Show Me</span>
    </div>
  </div>
);

const TabCell = ({ cls, children }: { cls: string; children: React.ReactNode }) => (
  <div className={`flex h-full shrink-0 items-center overflow-hidden border-r border-[#ccc] text-[14.7px] text-[#555] whitespace-nowrap ${cls}`}>{children}</div>
);

const Tabs = () => (
  <div className="flex h-[37px] border-y border-[#ccc] bg-[#e4e4e4] font-['Noto_Sans',sans-serif]">
    <TabCell cls="w-[157px] pl-[6px] gap-[4px]">
      <svg viewBox="0 0 9 12" className="w-[9px] h-[12px]"><ellipse cx="4.500" cy="2" rx="3.500" ry="1.500" fill="none" stroke="#666" /><path d="M1 2v8c0 1 1 1.500 3.500 1.500S8 11 8 10V2" fill="none" stroke="#666" /></svg>
      Data Source
    </TabCell>
    <TabCell cls="w-[118px] justify-end pr-[13px]"><span>alcost of return</span></TabCell>
    <TabCell cls="w-[250px] pl-[7px]">correlation b/w sales and returns</TabCell>
    <TabCell cls="w-[245px] pl-[10px]">return rate by product category</TabCell>
    <TabCell cls="w-[187px] pl-[7px]">return rate by customer</TabCell>
    <TabCell cls="w-[243px] pl-[9px]">return rate by some geographic</TabCell>
    <TabCell cls="w-[151px] pl-[7px]">return rate by time</TabCell>
    <TabCell cls="w-[139px] pl-[6px]">composite charts</TabCell>
    <div className="flex h-full w-[146px] shrink-0 items-center justify-center gap-[4px] border-r border-[#ccc] bg-[#fafafa] pl-[2px] text-[15px] font-semibold text-[#444] whitespace-nowrap">
      <svg viewBox="0 0 12 12" className="w-[12px] h-[12px]"><path d="M.5.5h11v11H.5zM6 .5v11M.5 6h11" fill="none" stroke="#666" /></svg>
      Return Analysis
    </div>
    <TabCell cls="w-[181px] justify-center gap-[4px] pr-[4px]">
      <svg viewBox="0 0 11 13" className="w-[11px] h-[13px]"><path d="M.5 1.500C3 .5 4.500 1 5.500 2c1-1 2.500-1.500 5-.5v9c-2-1-3.500-.5-5 2-1.500-2.500-3-3-5-2zM5.500 2v11" fill="none" stroke="#666" /></svg>
      return analysis story
    </TabCell>
    <div className="flex flex-1 items-center justify-end pr-[2px]">
      <svg viewBox="0 0 20 22" className="w-[18px] h-[20px]" fill="none" stroke="#666"><path d="M14 12V2H3v17h8M6 15v-4M9 15V7M12 15v-3" /><path d="M11 17h8M15 13v8" stroke="#333" strokeWidth="2" /></svg>
    </div>
  </div>
);

const StatusBar = () => (
  <div className="flex h-[14px] overflow-hidden bg-[#ececec] font-['Noto_Sans',sans-serif]">
    <div className="ml-[1500px] flex w-[153px] items-center gap-[7px] border-r border-[#ccc] pl-[3px] text-[13px] text-[#111] whitespace-nowrap">
      <svg viewBox="0 0 10 14" className="w-[10px] h-[14px] shrink-0" fill="none" stroke="#666"><circle cx="5" cy="3" r="2.500" /><path d="M1 14c0-5 8-5 8 0" /></svg>
      <span className="mt-[9px]">yashitha kesire</span>
      <span className="ml-[10px] mt-[7px] border-x-[3px] border-t-[4px] border-x-transparent border-t-[#222]" />
    </div>
    <div className="w-[32px] border-r border-[#ccc]" />
    <div className="w-[28px] border-r border-[#ccc]" />
    <div className="w-[61px] border-r border-[#ccc]" />
    <div className="ml-[7px] flex items-center pt-[5px]">
      <span className="flex w-[16px] items-center gap-[1px]"><span className="h-[8px] w-[1px] bg-[#666]" /><span className="border-y-[4px] border-r-[5px] border-y-transparent border-r-[#666]" /></span>
      <span className="flex w-[16px] justify-center"><span className="border-y-[4px] border-r-[5px] border-y-transparent border-r-[#666]" /></span>
      <span className="flex w-[16px] justify-center"><span className="border-y-[4px] border-l-[5px] border-y-transparent border-l-[#666]" /></span>
      <span className="flex w-[16px] items-center justify-end gap-[1px]"><span className="border-y-[4px] border-l-[5px] border-y-transparent border-l-[#666]" /><span className="h-[8px] w-[1px] bg-[#666]" /></span>
    </div>
  </div>
);

const App = () => (
  <div className="flex h-[931px] w-[1845px] flex-col overflow-hidden bg-[#f5f5f5]">
    <div className="h-[27px] shrink-0 overflow-hidden bg-[#cce8ff] font-['Liberation_Sans',sans-serif] text-[17.5px] leading-[20px] text-[#2a78a8]">
      <div className="flex items-center justify-between -mt-[7px] pl-[20px]">
        <div className="flex items-center gap-[14px]">
          <svg viewBox="0 0 14 18" className="w-[14px] h-[18px]"><path d="M3 1v5h8V1M7 6v6M4 16l3-4 3 4" fill="none" stroke="#2a78a8" strokeWidth="1.5" /></svg>
          <span>Tableau Desktop Public Edition</span>
        </div>
        <span className="w-[85px] overflow-hidden whitespace-nowrap">Buy Tableau Desktop</span>
      </div>
    </div>
    <Toolbar />
    <div className="flex h-[803px] shrink-0">
      <Sidebar />
      <Dashboard />
    </div>
    <Tabs />
    <StatusBar />
  </div>
);

export default App;
